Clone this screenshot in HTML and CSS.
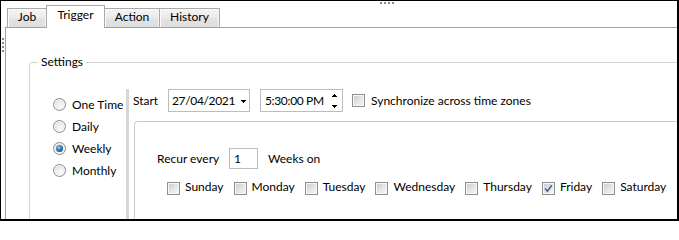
FILE: index.html
```html
<!DOCTYPE html>
<html>
<head>
<meta charset="utf-8">
<title>Trigger</title>
<link rel="stylesheet" href="styles.css">
</head>
<body>
<div class="frame">
  <div class="grip grip-top"></div>
  <div class="grip grip-left"></div>
  <div class="tabs">
    <div class="tab tab-job">Job</div>
    <div class="tab tab-trigger active">Trigger</div>
    <div class="tab tab-action">Action</div>
    <div class="tab tab-history">History</div>
  </div>
  <div class="panel">
    <div class="group">
      <span class="legend">Settings</span>
      <div class="group-body">
        <div class="radios">
          <div class="radio-row"><span class="radio"></span>One Time</div>
          <div class="radio-row"><span class="radio"></span>Daily</div>
          <div class="radio-row"><span class="radio on"><span class="dot"></span></span>Weekly</div>
          <div class="radio-row"><span class="radio"></span>Monthly</div>
        </div>
        <div class="splitter"></div>
        <div class="main">
          <div class="start-row">
            <span class="start-label">Start</span>
            <div class="picker date">
              <span class="picker-text">27/04/2021</span>
              <svg class="drop-arrow" width="5" height="3" viewBox="0 0 5 3" shape-rendering="crispEdges"><path d="M0 0h5v1h-5z M1 1h3v1h-3z M2 2h1v1h-1z" fill="#000"/></svg>
            </div>
            <div class="picker time">
              <span class="picker-text">5:30:00 PM</span>
              <span class="spin">
                <svg width="5" height="3" viewBox="0 0 5 3" shape-rendering="crispEdges"><path d="M2 0h1v1h-1z M1 1h3v1h-3z M0 2h5v1h-5z" fill="#000"/></svg>
                <svg width="5" height="3" viewBox="0 0 5 3" shape-rendering="crispEdges"><path d="M0 0h5v1h-5z M1 1h3v1h-3z M2 2h1v1h-1z" fill="#000"/></svg>
              </span>
            </div>
            <div class="check-item sync"><span class="check"></span>Synchronize across time zones</div>
          </div>
          <div class="weekly">
            <div class="recur-row">
              <span class="recur-label">Recur every</span>
              <div class="num">1</div>
              <span class="weeks">Weeks on</span>
            </div>
            <div class="days">
              <div class="check-item"><span class="check"></span>Sunday</div>
              <div class="check-item"><span class="check"></span>Monday</div>
              <div class="check-item"><span class="check"></span>Tuesday</div>
              <div class="check-item"><span class="check"></span>Wednesday</div>
              <div class="check-item"><span class="check"></span>Thursday</div>
              <div class="check-item"><span class="check checked"><svg width="11" height="11" viewBox="0 0 11 11"><path d="M2.2 5.6 L4.4 8.2 L8.8 2.2" fill="none" stroke="#4a5f8f" stroke-width="1.6"/></svg></span>Friday</div>
              <div class="check-item"><span class="check"></span>Saturday</div>
            </div>
          </div>
        </div>
      </div>
    </div>
  </div>
</div>
</body>
</html>
```
FILE: styles.css
```css
* { box-sizing: border-box; }
body {
  margin: 0;
  background: #fff;
  color: #000;
  font-family: Lato, "Noto Sans", sans-serif;
  font-size: 12px;
  line-height: 16px;
}
.frame {
  position: relative;
  width: 679px;
  height: 221px;
  border-style: solid;
  border-color: #000;
  border-width: 1px 2px 2px 1px;
  overflow: hidden;
  background: #fff;
}
.grip { position: absolute; }
.grip-top {
  left: 379px;
  top: 1px;
  width: 14px;
  height: 2px;
  background: linear-gradient(to right, #8a8a8a 2px, transparent 2px) 0 0 / 4px 2px repeat-x;
}
.grip-left {
  left: 1px;
  top: 37px;
  width: 2px;
  height: 14px;
  background: linear-gradient(#8a8a8a 2px, transparent 2px) 0 0 / 2px 4px repeat-y;
}

/* tabs */
.tabs {
  display: flex;
  align-items: flex-end;
  height: 26px;
  padding: 4px 0 0 6px;
}
.tab {
  height: 19px;
  margin-left: -1px;
  border: 1px solid #a9a9a9;
  border-bottom: 0;
  text-align: center;
  line-height: 16px;
  background: linear-gradient(#f4f4f4, #ececec 45%, #e2e2e2 55%, #dedede);
  box-shadow: inset 1px 1px 0 #fbfbfb, inset -1px 0 0 #f4f4f4;
}
.tab-job { width: 40px; margin-left: 0; }
.tab-trigger { width: 59px; }
.tab-action { width: 56px; }
.tab-history { width: 61px; }
.tab.active {
  position: relative;
  z-index: 1;
  height: 23px;
  margin-bottom: -1px;
  padding-top: 1px;
  background: #fff;
  box-shadow: none;
}

/* panel */
.panel {
  height: 260px;
  margin: 0 -20px 0 4px;
  border-top: 1px solid #a0a0a0;
  border-left: 1px solid #a0a0a0;
}
.group {
  position: relative;
  height: 200px;
  margin: 34px 0 0 23px;
  border: 1px solid #d2d2d2;
  border-radius: 3px;
}
.legend {
  position: absolute;
  top: -9px;
  left: 8px;
  padding: 0 3px;
  background: #fff;
}
.group-body {
  display: flex;
  padding-top: 26px;
}
.radios {
  width: 96px;
  flex: none;
  padding: 5px 0 0 23px;
}
.radio-row {
  display: flex;
  align-items: flex-start;
  height: 22px;
  line-height: 22px;
  white-space: nowrap;
}
.radio {
  display: flex;
  align-items: center;
  justify-content: center;
  flex: none;
  width: 13px;
  height: 13px;
  margin: 4px 6px 0 0;
  border-radius: 50%;
  border: 1px solid #8d8d8d;
  background: radial-gradient(circle at 62% 68%, #fbfbfb 0, #ececec 45%, #d2d2d2 100%);
  box-shadow: inset 0 0 0 1px #f6f6f6;
}
.radio .dot {
  width: 7px;
  height: 7px;
  border-radius: 50%;
  background: radial-gradient(circle at 40% 35%, #a9d4f5 0, #4a8fcc 30%, #1d5c99 65%, #0d3b69 100%);
}
.splitter {
  width: 3px;
  flex: none;
  background: #d6d6d6;
}
.main {
  flex: 1;
  padding-left: 4px;
}
.start-row {
  display: flex;
  align-items: center;
  height: 23px;
  white-space: nowrap;
}
.start-label {
  width: 35px;
  flex: none;
  padding-top: 1px;
}
.picker {
  display: flex;
  align-items: center;
  flex: none;
  height: 23px;
  padding-top: 1px;
  border: 1px solid #bcbcbc;
  background: #fff;
}
.picker-text {
  letter-spacing: -0.35px;
}
.date {
  width: 82px;
  padding-left: 3px;
}
.drop-arrow {
  margin: 0 3px 0 auto;
  display: block;
}
.time {
  width: 83px;
  margin-left: 10px;
  padding-left: 4px;
}
.spin {
  display: flex;
  flex-direction: column;
  justify-content: space-between;
  height: 14px;
  margin: 0 5px 0 auto;
}
.spin svg { display: block; }
.check-item {
  display: flex;
  align-items: center;
  white-space: nowrap;
}
.check {
  display: flex;
  align-items: center;
  justify-content: center;
  flex: none;
  width: 13px;
  height: 13px;
  margin-right: 5px;
  border: 1px solid #8e8f8f;
  background: linear-gradient(135deg, #c9c9c9 0%, #e4e4e4 50%, #f7f7f7 100%);
  box-shadow: inset 0 0 0 1px #f7f7f7;
}
.check svg { display: block; }
.sync {
  margin-left: 9px;
}
.sync .check { margin-right: 6px; }

/* weekly box */
.weekly {
  height: 150px;
  margin: 9px 0 0 1px;
  padding: 26px 0 0 22px;
  border: 1px solid #cacaca;
  border-radius: 3px;
}
.recur-row {
  display: flex;
  align-items: baseline;
  white-space: nowrap;
}
.recur-label {
  width: 72px;
  flex: none;
}
.num {
  width: 29px;
  height: 21px;
  flex: none;
  padding: 2px 0 0 4px;
  border: 1px solid #bcbcbc;
}
.weeks {
  margin-left: 10px;
}
.days {
  display: flex;
  margin: 10px 0 0 10px;
}
.days .check-item {
  align-items: flex-start;
  margin-right: 10px;
}
.days .check {
  margin-top: 3px;
}
```
